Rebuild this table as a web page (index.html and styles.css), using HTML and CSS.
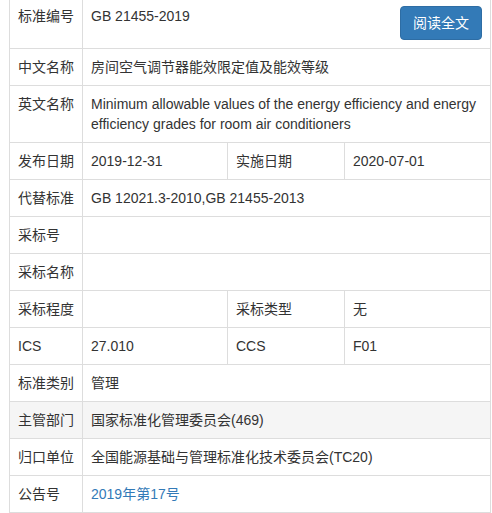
FILE: index.html
```html
<!DOCTYPE html>
<html lang="zh-CN">
<head>
<meta charset="utf-8">
<link rel="stylesheet" href="styles.css">
</head>
<body>
<div class="wrap">
<table class="info">
  <colgroup>
    <col class="c1"><col class="c2"><col class="c3"><col class="c4">
  </colgroup>
  <tbody>
    <tr>
      <td class="lbl">标准编号</td>
      <td colspan="3"><a class="btn" href="#">阅读全文</a>GB 21455-2019</td>
    </tr>
    <tr>
      <td class="lbl">中文名称</td>
      <td colspan="3">房间空气调节器能效限定值及能效等级</td>
    </tr>
    <tr>
      <td class="lbl">英文名称</td>
      <td colspan="3">Minimum allowable values of the energy efficiency and energy efficiency grades for room air conditioners</td>
    </tr>
    <tr>
      <td class="lbl">发布日期</td>
      <td>2019-12-31</td>
      <td class="lbl">实施日期</td>
      <td>2020-07-01</td>
    </tr>
    <tr>
      <td class="lbl">代替标准</td>
      <td colspan="3">GB 12021.3-2010,GB 21455-2013</td>
    </tr>
    <tr>
      <td class="lbl">采标号</td>
      <td colspan="3"></td>
    </tr>
    <tr>
      <td class="lbl">采标名称</td>
      <td colspan="3"></td>
    </tr>
    <tr>
      <td class="lbl">采标程度</td>
      <td></td>
      <td class="lbl">采标类型</td>
      <td>无</td>
    </tr>
    <tr>
      <td class="lbl">ICS</td>
      <td>27.010</td>
      <td class="lbl">CCS</td>
      <td>F01</td>
    </tr>
    <tr>
      <td class="lbl">标准类别</td>
      <td colspan="3">管理</td>
    </tr>
    <tr class="hl">
      <td class="lbl">主管部门</td>
      <td colspan="3">国家标准化管理委员会(469)</td>
    </tr>
    <tr>
      <td class="lbl">归口单位</td>
      <td colspan="3">全国能源基础与管理标准化技术委员会(TC20)</td>
    </tr>
    <tr>
      <td class="lbl">公告号</td>
      <td colspan="3"><a class="link" href="#">2019年第17号</a></td>
    </tr>
  </tbody>
</table>
</div>
</body>
</html>
```

FILE: styles.css
```css
html, body {
  margin: 0;
  padding: 0;
  background: #fff;
}
body {
  font-family: "Liberation Sans", Arial, "Noto Sans CJK SC", sans-serif;
  font-size: 14px;
  line-height: 20px;
  color: #333;
}
.wrap {
  padding-left: 9px;
  margin-top: -3px;
}
.info {
  width: 481px;
  border-collapse: collapse;
  table-layout: fixed;
}
.c1 { width: 73px; }
.c2 { width: 145px; }
.c3 { width: 117px; }
.c4 { width: 146px; }
.info td {
  border: 1px solid #ddd;
  padding: 8px;
  vertical-align: top;
  text-align: left;
}
.hl td {
  background: #f5f5f5;
}
.btn {
  float: right;
  display: inline-block;
  padding: 6px 12px;
  font-size: 14px;
  line-height: 20px;
  color: #fff;
  background: #337ab7;
  border: 1px solid #2e6da4;
  border-radius: 4px;
  text-decoration: none;
}
.link {
  color: #337ab7;
  text-decoration: none;
}
```
